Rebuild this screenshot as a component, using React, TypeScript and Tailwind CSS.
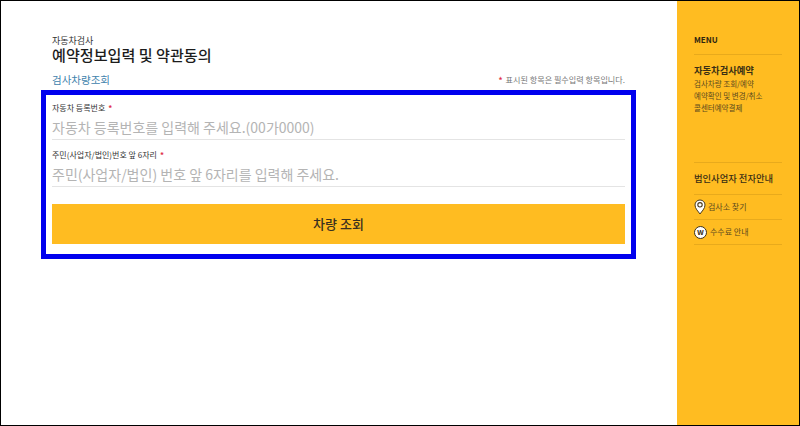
const font = "font-['Noto_Sans_CJK_KR','Noto_Sans',sans-serif]";

const Required = () => <span className="text-[#e0304a] font-bold ml-[3px]">*</span>;

const Field = ({label, placeholder}: {label: string; placeholder: string}) => (
    <div className="h-[38px] border-b border-[#e4e4e4]">
        <div className="text-[8px] leading-[12px] text-[#333]">{label}<Required/></div>
        <div className="text-[14px] leading-[22px] mt-[2px] text-[#b4b4b4]">{placeholder}</div>
    </div>
);

const PinIcon = () => (
    <svg width="12" height="16" viewBox="0 0 12 16" className="flex-shrink-0">
        <path d="M6 1C3 1 1 3.3 1 6c0 3.6 3.3 6.5 5 9 1.7-2.5 5-5.4 5-9 0-2.7-2-5-5-5z" fill="#fff" stroke="#4a3a1a" strokeWidth="1"/>
        <circle cx="6" cy="5.8" r="2.2" fill="none" stroke="#4a3a1a" strokeWidth="1.1"/>
    </svg>
);

const WIcon = () => (
    <span className="w-[13px] h-[13px] rounded-full bg-white border border-[#3d3118] flex items-center justify-center text-[8px] leading-none font-bold text-[#3d3118] flex-shrink-0">w</span>
);

const App = () => {
    return (
        <div className={`w-[800px] h-[426px] border border-black bg-white flex overflow-hidden ${font}`}>
            <main className="w-[676px] flex-shrink-0 pt-[34px] pl-[51px] pr-[52px] text-[#222]">
                <div className="text-[9px] leading-[11px] text-[#333]">자동차검사</div>
                <h1 className="text-[15.1px] leading-[16px] font-medium text-[#1c1c1c]">예약정보입력 및 약관동의</h1>
                <div className="flex items-center justify-between mt-[11px] h-[14px]">
                    <span className="text-[10.5px] text-[#3f83ad]">검사차량조회</span>
                    <span className="text-[8.1px] text-[#777]"><span className="text-[#e0304a] font-bold mr-[3px]">*</span>표시된 항목은 필수입력 항목입니다.</span>
                </div>
                <form className="-mx-[11px] mt-[3px] h-[169px] border-[5px] border-[#0000ee] pt-[7px] px-[6px]">
                    <div className="w-[573px] flex flex-col gap-[9px]">
                        <Field label="자동차 등록번호" placeholder="자동차 등록번호를 입력해 주세요.(00가0000)"/>
                        <Field label="주민(사업자/법인)번호 앞 6자리" placeholder="주민(사업자/법인) 번호 앞 6자리를 입력해 주세요."/>
                        <button type="button" className="h-[40px] mt-[8px] bg-[#ffbc21] text-[13px] font-medium text-[#3a3020]">차량 조회</button>
                    </div>
                </form>
            </main>
            <aside className="w-[122px] flex-shrink-0 bg-[#ffbc21] px-[17px] pt-[33px] text-[#5d4a1e]">
                <div className="text-[8px] leading-[12px] font-bold text-[#2e2610]">MENU</div>
                <div className="border-t border-[#e8aa1c] mt-[8px] pt-[9px]">
                    <div className="text-[9.3px] leading-[13px] font-bold text-[#3a2f14]">자동차검사예약</div>
                    <div className="text-[7.5px] leading-[12px] mt-px">검사차량 조회/예약</div>
                    <div className="text-[7.5px] leading-[12px]">예약확인 및 변경/취소</div>
                    <div className="text-[7.5px] leading-[12px]">콜센터예약결제</div>
                </div>
                <div className="border-t border-[#e8aa1c] mt-[48px] h-[32px] flex items-center text-[9.3px] font-medium text-[#3a2f14]">법인사업자 전자안내</div>
                <div className="border-t border-[#e8aa1c] h-[25px] flex items-center gap-[2px] text-[8px]"><PinIcon/>검사소 찾기</div>
                <div className="border-y border-[#e8aa1c] h-[26px] flex items-center gap-[3px] text-[8px]"><WIcon/>수수료 안내</div>
            </aside>
        </div>
    );
};

export default App;
